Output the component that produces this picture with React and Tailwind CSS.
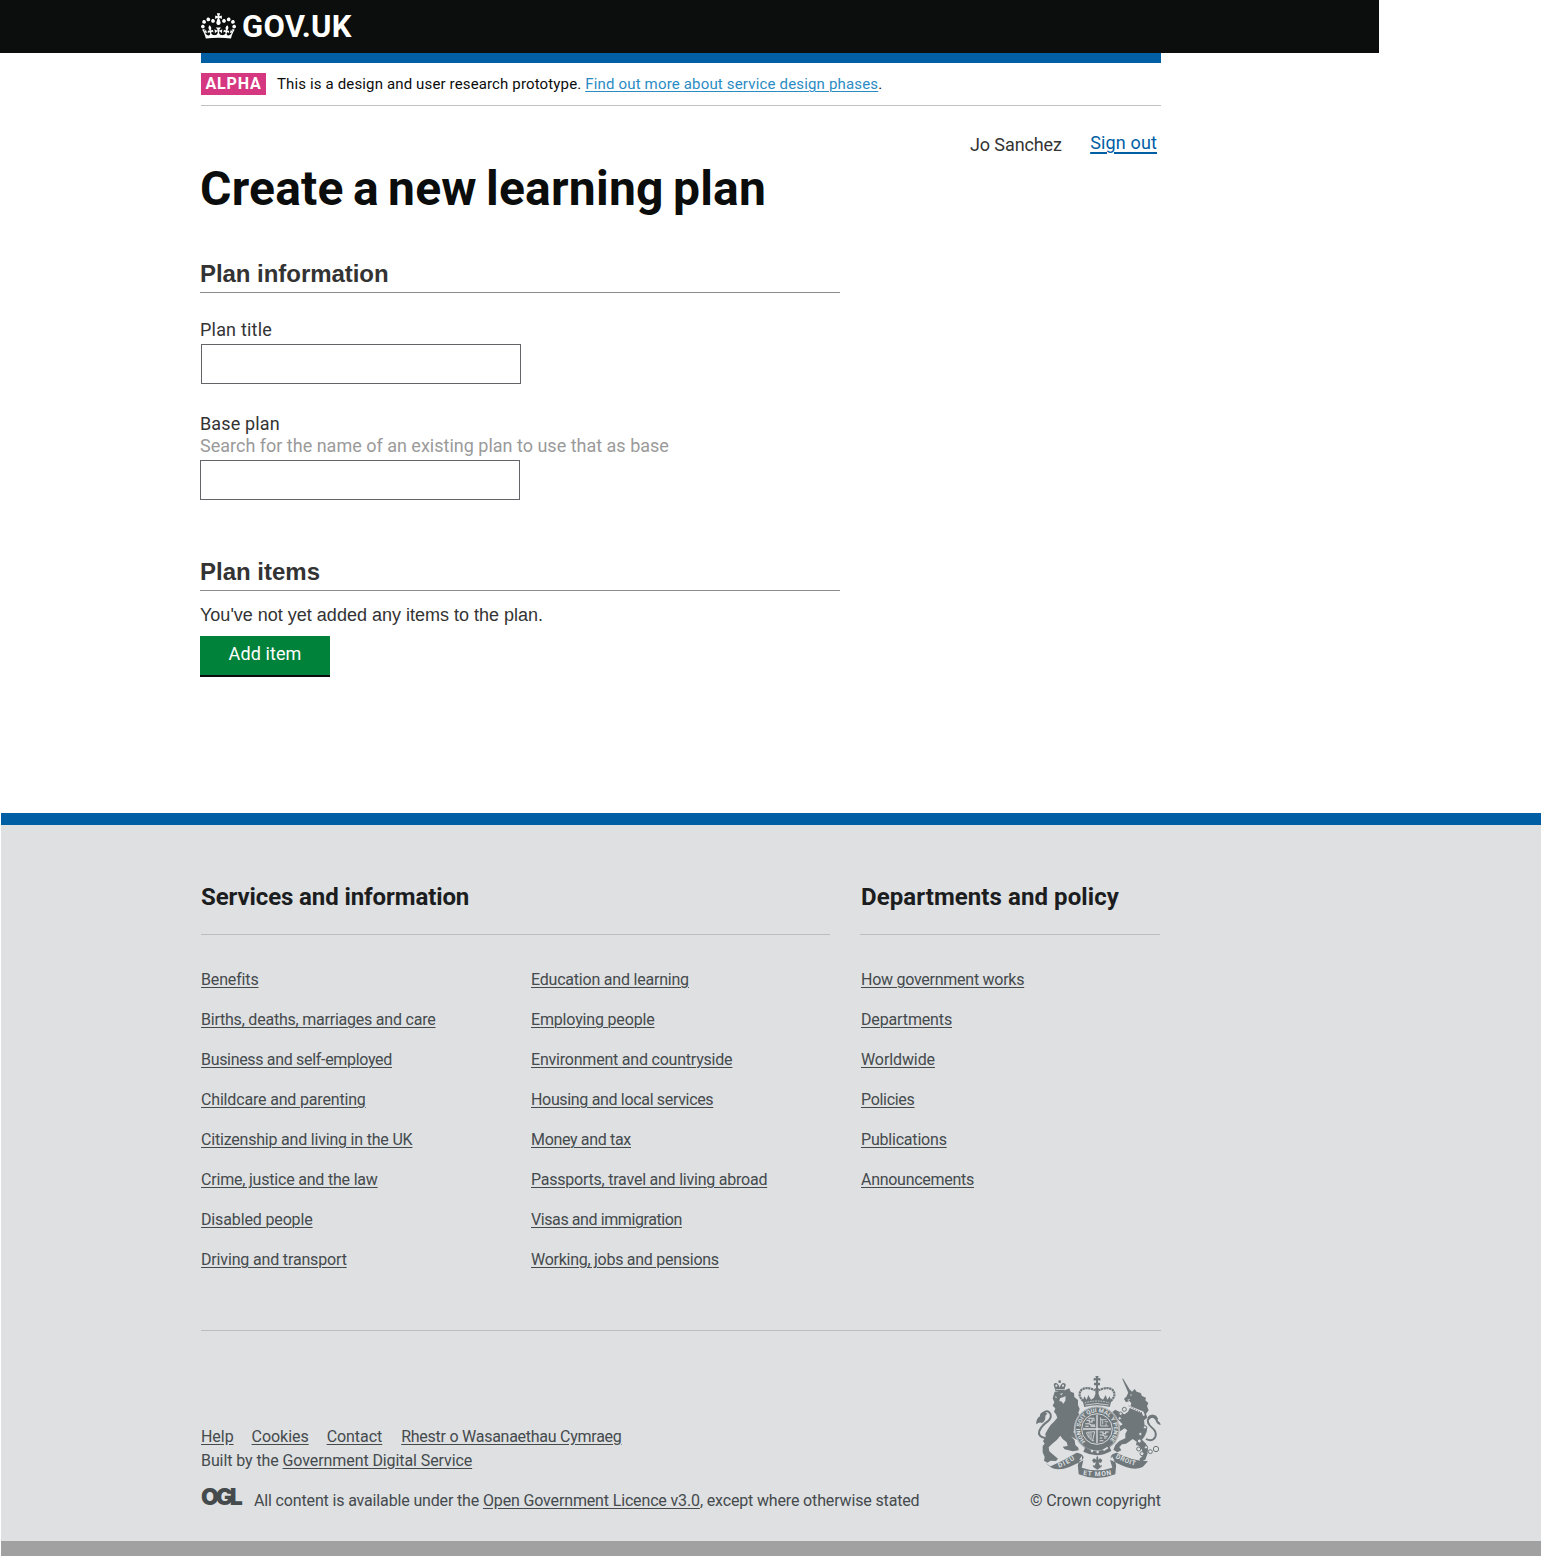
const SERVICES_LEFT = [
  { label: 'Benefits', tracking: 'tracking-[-0.15px]' },
  { label: 'Births, deaths, marriages and care', tracking: 'tracking-[-0.22px]' },
  { label: 'Business and self-employed', tracking: 'tracking-[-0.32px]' },
  { label: 'Childcare and parenting', tracking: 'tracking-[-0.17px]' },
  { label: 'Citizenship and living in the UK', tracking: 'tracking-[-0.2px]' },
  { label: 'Crime, justice and the law', tracking: 'tracking-[-0.2px]' },
  { label: 'Disabled people', tracking: 'tracking-[-0.14px]' },
  { label: 'Driving and transport', tracking: 'tracking-[-0.16px]' },
];

const SERVICES_RIGHT = [
  { label: 'Education and learning', tracking: 'tracking-[-0.21px]' },
  { label: 'Employing people', tracking: 'tracking-[-0.17px]' },
  { label: 'Environment and countryside', tracking: 'tracking-[-0.21px]' },
  { label: 'Housing and local services', tracking: 'tracking-[-0.33px]' },
  { label: 'Money and tax', tracking: 'tracking-[-0.33px]' },
  { label: 'Passports, travel and living abroad', tracking: 'tracking-[-0.23px]' },
  { label: 'Visas and immigration', tracking: 'tracking-[-0.41px]' },
  { label: 'Working, jobs and pensions', tracking: 'tracking-[-0.27px]' },
];

const DEPARTMENTS = [
  { label: 'How government works', tracking: 'tracking-[-0.26px]' },
  { label: 'Departments', tracking: 'tracking-[-0.14px]' },
  { label: 'Worldwide', tracking: 'tracking-[-0.1px]' },
  { label: 'Policies', tracking: 'tracking-[-0.3px]' },
  { label: 'Publications', tracking: 'tracking-[-0.2px]' },
  { label: 'Announcements', tracking: 'tracking-[-0.28px]' },
];

function Crown() {
  return (
    <svg viewBox="0 0 132 97" className="h-[26px] w-[35px]" fill="#fff" aria-hidden="true">
      <path
        fillRule="evenodd"
        d="M25 30.2c3.5 1.5 7.7-.2 9.1-3.7 1.5-3.6-.2-7.8-3.9-9.2-3.6-1.4-7.6.3-9.1 3.9-1.4 3.5.3 7.5 3.9 9zM9 39.5c3.6 1.5 7.8-.2 9.2-3.7 1.5-3.6-.2-7.8-3.9-9.1-3.6-1.5-7.6.2-9.1 3.8-1.4 3.5.3 7.5 3.8 9zM4.4 57.2c3.5 1.5 7.7-.2 9.1-3.8 1.5-3.6-.2-7.7-3.9-9.1-3.5-1.5-7.6.3-9.1 3.8-1.4 3.5.3 7.6 3.9 9.1zm38.3-21.4c3.5 1.5 7.7-.2 9.1-3.8 1.5-3.6-.2-7.7-3.9-9.1-3.6-1.5-7.6.3-9.1 3.8-1.3 3.6.4 7.7 3.9 9.1zm64.4-5.6c-3.6 1.5-7.8-.2-9.1-3.7-1.5-3.6.2-7.8 3.8-9.2 3.6-1.4 7.7.3 9.2 3.9 1.3 3.5-.4 7.5-3.9 9zm15.9 9.3c-3.6 1.5-7.7-.2-9.1-3.7-1.5-3.6.2-7.8 3.7-9.1 3.6-1.5 7.7.2 9.2 3.8 1.5 3.5-.3 7.5-3.8 9zm4.7 17.7c-3.6 1.5-7.8-.2-9.2-3.8-1.5-3.6.2-7.7 3.9-9.1 3.6-1.5 7.7.3 9.2 3.8 1.3 3.5-.4 7.6-3.9 9.1zM89.3 35.8c-3.6 1.5-7.8-.2-9.2-3.8-1.4-3.6.2-7.7 3.9-9.1 3.6-1.5 7.7.3 9.2 3.8 1.4 3.6-.3 7.7-3.9 9.1zM69.7 17.7l8.9 4.7V9.3l-8.9 2.8c-.2-.3-.5-.6-.9-.9L72.4 0H59.6l3.5 11.2c-.3.3-.6.5-.9.9l-8.8-2.8v13.1l8.8-4.7c.3.3.6.7.9.9l-5 15.4v.1c-.2.8-.4 1.6-.4 2.4 0 4.1 3.1 7.5 7 8.1h.2c.3 0 .7.1 1 .1.4 0 .7 0 1-.1h.2c4-.6 7.1-4.1 7.1-8.1 0-.8-.1-1.7-.4-2.4V34l-5.1-15.4c.4-.2.7-.6 1-.9zM66 92.8c16.9 0 32.8 1.1 47.1 3.2 4-16.9 8.9-26.7 14-33.5l-9.6-3.4c1 4.9 1.1 7.2 0 10.2-1.5-1.4-3-4.3-4.2-8.7L108.6 76c2.8-2 5-3.2 7.5-3.3-4.4 9.4-10 11.9-13.6 11.2-4.3-.8-6.3-4.6-5.6-7.9 1-4.7 5.7-5.9 8-.5 4.3-8.7-3-11.4-7.6-8.8 7.1-7.2 7.9-13.5 2.1-21.1-8 6.1-8.1 12.3-4.5 20.8-4.7-5.4-12.1-2.5-9.5 6.2 3.4-5.2 7.9-2 7.2 3.1-.6 4.3-6.4 7.8-13.5 7.2-10.3-.9-10.9-8-11.2-13.8 2.5-.5 7.1 1.8 11 7.3L80.2 60c-4.1 4.4-8 5.3-12.3 5.4 1.4-4.4 8-11.6 8-11.6H55.5s6.4 7.2 7.9 11.6c-4.2-.1-8-1-12.3-5.4l1.4 16.4c3.9-5.5 8.5-7.7 10.9-7.3-.3 5.8-.9 12.8-11.1 13.8-7.2.6-12.9-2.9-13.5-7.2-.7-5 3.8-8.3 7.1-3.1 2.7-8.7-4.6-11.6-9.4-6.2 3.7-8.5 3.6-14.7-4.6-20.8-5.8 7.6-5 13.9 2.2 21.1-4.7-2.6-11.9.1-7.7 8.8 2.3-5.5 7.1-4.2 8.1.5.7 3.3-1.3 7.1-5.7 7.9-3.5.7-9-1.8-13.5-11.2 2.5.1 4.7 1.3 7.5 3.3l-4.7-15.4c-1.2 4.4-2.7 7.2-4.3 8.7-1.1-3-.9-5.3 0-10.2l-9.5 3.4c5 6.9 9.9 16.7 14 33.5 14.8-2.1 30.8-3.2 47.7-3.2z"
      />
    </svg>
  );
}

const INK = '#6f777b';
const PAPER = '#dee0e2';

function RoyalArms() {
  return (
    <svg
      viewBox="45 30 381 312"
      className="-mr-px h-[104px] w-[127px]"
      fill={INK}
      fontFamily="Roboto, sans-serif"
      fontWeight="700"
      aria-hidden="true"
    >
      {/* lion's crown */}
      <circle cx="119" cy="50" r="4" />
      <path d="M103 66 Q98 55 107 54 Q115 54 119 68 Q123 54 131 54 Q141 56 135 67 L132 78 L106 78 Z" />
      <g fill={PAPER}>
        <circle cx="109" cy="62" r="3.2" />
        <circle cx="129" cy="62" r="3.2" />
        <circle cx="119" cy="60" r="2" />
        <path d="M106 73 H132 V75 H106 Z" />
      </g>
      {/* lion */}
      <path d="M104 80 L134 76 L148 70 L152 80 L162 84 L163 96 L174 105 L174 120 L179 132 L175 144 L182 154 L173 160 L184 172 L180 184 L170 182 L164 190 L160 202 L155 216 L164 226 L166 240 L175 248 L176 256 L158 259 L134 253 L128 245 L143 243 L140 232 L128 222 L121 212 L111 224 L96 237 L86 247 L88 259 L98 268 L114 281 L108 288 L92 287 L82 293 L72 287 L74 276 L68 262 L68 243 L74 236 L69 228 L77 216 L76 206 L84 192 L92 180 L102 170 L112 158 L108 148 L102 140 L106 130 L98 122 L103 112 L98 100 L101 90 Z" />
      <g fill={PAPER}>
        <path d="M104 94 L111 96 L108 100 Z" />
        <path d="M120 87 L129 84 L124 91 Z" />
        <path d="M120 100 L137 94 L136 107 L130 116 L124 109 L118 109 Z" />
      </g>
      <path d="M148 156 L172 166 L186 184 L178 196 L162 184 L146 178 Z" />
      <path d="M150 198 L170 206 L180 218 L170 224 L156 216 Z" />
      {/* lion's tail */}
      <path
        d="M77 220 Q52 215 58 198 Q65 182 82 170 Q100 154 88 142 Q78 134 68 146"
        fill="none"
        stroke={INK}
        strokeWidth="6"
      />
      <path d="M72 140 Q58 144 60 154 Q48 160 49 178 Q58 170 66 174 Q78 166 76 152 L82 146 Z" />
      {/* unicorn */}
      <path d="M306 40 L310 42 L333 80 L325 84 Z" />
      <path d="M325 82 L330 74 L336 80 L344 72 L350 80 L362 84 L366 93 L378 98 L376 106 L385 114 L381 124 L386 136 L378 146 L382 158 L372 166 L374 182 L382 186 L380 200 L374 214 L366 224 L378 236 L384 252 L382 268 L376 284 L362 290 L358 282 L368 272 L366 254 L356 242 L348 240 L350 230 L338 222 L330 228 L318 236 L306 238 L298 246 L304 256 L292 262 L280 254 L286 240 L298 228 L316 220 L316 206 L322 196 L314 190 L298 200 L290 190 L282 180 L290 172 L302 182 L308 178 L296 166 L282 154 L276 142 L286 134 L300 142 L314 148 L324 140 L330 128 L334 114 L328 108 L318 112 L312 102 L320 94 Z" />
      <g fill={PAPER}>
        <circle cx="333" cy="90" r="2" />
        <path d="M322 104 L330 102 L326 107 Z" />
      </g>
      <path d="M324 120 L334 128 L368 142 L372 152" fill="none" stroke={PAPER} strokeWidth="6" />
      <path d="M326 122 L336 128 L368 144" fill="none" stroke={INK} strokeWidth="3" strokeDasharray="3 4" />
      {/* unicorn's tail */}
      <path
        d="M378 222 Q396 232 406 216 Q412 202 396 188 Q376 172 388 156 Q402 146 412 162"
        fill="none"
        stroke={INK}
        strokeWidth="5.5"
      />
      <path d="M382 158 Q390 144 408 152 Q414 160 414 168 Q422 172 422 180 Q410 178 406 164 Q396 152 388 164 Z" />
      {/* imperial crown */}
      <path d="M226 33 H236 L234 40 L241 39 V47 L234 46 L234 53 H240 V61 H234 V72 H228 V61 H222 V53 H228 L228 46 L221 47 V39 L228 40 Z" />
      <g fill="none" stroke={INK} strokeWidth="6.5" strokeDasharray="7 1.5">
        <path d="M190 108 Q171 91 184 75 Q200 63 225 76" />
        <path d="M272 108 Q291 91 278 75 Q262 63 237 76" />
      </g>
      <path d="M225 70 H237 L234 104 H228 Z" />
      <path d="M188 108 L193 94 L200 104 L205 90 L213 104 L222 98 L226 88 H236 L240 98 L249 104 L257 90 L262 104 L269 94 L274 108 L269 126 Q231 116 193 126 Z" />
      <g fill="none" stroke={PAPER} strokeWidth="2.4">
        <path d="M194 114 Q231 102 268 114" strokeDasharray="5 3" />
        <path d="M196 120 Q231 111 266 120" />
      </g>
      {/* garter */}
      <circle cx="231" cy="192" r="68" stroke={PAPER} strokeWidth="2" />
      <circle cx="231" cy="192" r="65.5" fill="none" stroke={PAPER} strokeWidth="1.6" />
      <circle cx="231" cy="192" r="46" fill="none" stroke={PAPER} strokeWidth="2.8" />
      <path id="garter" d="M197 229 A50.5 50.5 0 1 1 266 229" fill="none" />
      <g fill={PAPER} fontSize="17">
        <text>
          <textPath href="#garter" textLength="236" lengthAdjust="spacingAndGlyphs">
            HONI SOIT QUI MAL Y PENSE
          </textPath>
        </text>
      </g>
      {/* quartered shield */}
      <g fill="none" stroke={PAPER} strokeWidth="3.2">
        <path d="M231 149 V235 M189 192 H273" strokeWidth="4" />
        <path d="M199 166 h9 v5 h8 v-6 h9 M196 176 h12 l5 4 h12 M205 160 h18 M196 184 h10 m6 0 h14" />
        <path d="M242 157 V183 H265 M242 164 H260 M248 166 V178 M254 170 H264 M258 175 V182" strokeWidth="2.4" />
        <path d="M199 202 Q206 224 222 228 M201 202 L224 200 L218 226 M207 203 V216 M213 203 V222" strokeWidth="2.6" />
        <path d="M239 201 h10 v5 h8 v-5 h9 M239 210 h10 l5 4 h9 M239 219 h8 m5 0 h8 M239 227 h11" />
      </g>
      {/* garter buckle */}
      <path d="M196 246 Q231 272 268 244 L274 258 Q231 282 190 260 Z" />
      <g fill={PAPER}>
        <circle cx="216" cy="258" r="3.6" />
        <circle cx="233" cy="261" r="3.6" />
        <path d="M248 254 L262 245 L265 250 L252 258 Z" />
      </g>
      {/* chain */}
      <g fill={PAPER} stroke={INK} strokeWidth="3">
        <circle cx="313" cy="133" r="6" />
        <circle cx="302" cy="146" r="5" />
        <circle cx="299" cy="160" r="5" />
        <circle cx="375" cy="187" r="5" />
        <circle cx="361" cy="207" r="5" />
        <circle cx="358" cy="228" r="6" />
        <circle cx="356" cy="252" r="6" />
        <circle cx="366" cy="266" r="6" />
        <circle cx="378" cy="247" r="5" />
        <circle cx="391" cy="260" r="6" />
        <circle cx="408" cy="252" r="8" />
      </g>
      {/* fleur-de-lis */}
      <path d="M229 278 L232 272 L235 278 L234 284 L241 280 L247 286 L243 294 L236 292 L240 302 L246 300 L244 306 L232 314 L220 306 L218 300 L224 302 L228 292 L221 294 L216 286 L222 280 L229 284 Z" />
      {/* scroll */}
      <path d="M76 294 L92 304 Q132 286 170 263 Q190 266 191 278 Q190 284 180 288 Q172 294 174 306 L176 328 Q231 350 286 328 L288 306 Q290 294 282 288 Q272 284 272 276 Q274 266 290 263 Q330 286 384 289 L368 306 Q346 316 318 306 Q286 292 270 284 L277 308 Q231 324 185 308 L190 286 Q176 294 148 306 Q118 318 96 309 Z" />
      <path d="M178 284 L186 272 L186 284 Z M276 274 L284 288 L272 284 Z" fill={PAPER} />
      <path id="scroll-left" d="M117 308 Q146 298 172 278" fill="none" />
      <path id="scroll-mid" d="M186 329 Q231 338 277 329" fill="none" />
      <path id="scroll-right" d="M286 278 Q318 296 352 303" fill="none" />
      <g fill={PAPER} fontSize="20">
        <text>
          <textPath href="#scroll-left" textLength="54">DIEU</textPath>
        </text>
        <text>
          <textPath href="#scroll-mid" textLength="86" startOffset="3">ET MON</textPath>
        </text>
        <text>
          <textPath href="#scroll-right" textLength="64">DROIT</textPath>
        </text>
      </g>
    </svg>
  );
}

function FooterList({ items }) {
  return (
    <ul className="flex flex-col gap-5">
      {items.map((item) => (
        <li key={item.label} className="h-5 leading-5">
          <a href="#" className={`underline decoration-1 underline-offset-2 ${item.tracking}`}>
            {item.label}
          </a>
        </li>
      ))}
    </ul>
  );
}

function Header() {
  return (
    <header className="flex h-[53px] w-[1379px] items-start bg-[#0b0e0c] pl-[201px]">
      <a href="#" className="flex text-white">
        <span className="mt-[13px]">
          <Crown />
        </span>
        <span className="mt-[9px] ml-[6px] text-[31px] leading-9 font-bold tracking-[0.25px]">GOV.UK</span>
      </a>
    </header>
  );
}

function PhaseBanner() {
  return (
    <div className="ml-[201px] w-[960px] border-t-10 border-b border-t-[#005ea5] border-b-[#bfc1c3]">
      <div className="flex h-[42px] items-center text-[15px] leading-[22px] text-[#0b0c0c]">
        <strong className="h-[22px] w-[65px] bg-[#d53880] text-center text-base leading-[22px] font-bold tracking-[0.8px] text-white">
          ALPHA
        </strong>
        <p className="ml-[11px] tracking-[0.14px]">
          This is a design and user research prototype.{' '}
          <a href="#" className="tracking-[0.17px] text-[#2b8cc4] underline decoration-1 underline-offset-2">
            Find out more about service design phases
          </a>
          .
        </p>
      </div>
    </div>
  );
}

function SectionHeading({ children, className }) {
  return (
    <h2
      className={`h-[35px] w-[640px] border-b border-[#8c8c8c] font-['Liberation_Sans',Arial,sans-serif] text-2xl leading-[31px] font-bold text-[#333333] ${className}`}
    >
      {children}
    </h2>
  );
}

function PlanForm() {
  return (
    <main className="pl-[200px]">
      <div className="flex w-[961px] pt-6 pl-[770px] text-lg leading-6 text-[#333]">
        <span className="pt-[3px] tracking-[-0.1px]">Jo Sanchez</span>
        <a
          href="#"
          className="ml-auto pt-px pr-[4px] tracking-[0.15px] text-[#005ea5] underline decoration-2 underline-offset-[3px]"
        >
          Sign out
        </a>
      </div>
      <h1 className="mt-[2px] text-5xl leading-[60px] font-bold tracking-[0.24px] text-[#0b0c0c] [word-spacing:-3px]">
        Create a new learning plan
      </h1>
      <SectionHeading className="mt-[39px] tracking-[-0.05px]">Plan information</SectionHeading>
      <div className="mt-[26px] text-lg leading-[22px] text-[#333]">
        <label htmlFor="plan-title" className="block tracking-[0.2px]">
          Plan title
        </label>
        <input id="plan-title" className="mt-[3px] ml-px block h-10 w-80 border border-[#636467] bg-white px-2" />
      </div>
      <div className="mt-[29px] text-lg leading-[22px] text-[#333]">
        <label htmlFor="base-plan" className="block">
          <span className="block tracking-[0.15px]">Base plan</span>
          <span className="block text-[#9a9a9a]">Search for the name of an existing plan to use that as base</span>
        </label>
        <input id="base-plan" className="mt-[3px] block h-10 w-80 border border-[#636467] bg-white px-2" />
      </div>
      <SectionHeading className="mt-[56px]">Plan items</SectionHeading>
      <p className="mt-[13px] font-['Liberation_Sans',Arial,sans-serif] text-lg leading-[22px] text-[#333]">
        You&#39;ve not yet added any items to the plan.
      </p>
      <button
        type="button"
        className="mt-[10px] block h-[41px] w-[130px] border-b-2 border-[#0b0c0c] bg-[#00823b] pb-[3px] text-lg leading-6 tracking-[0.1px] text-white"
      >
        Add item
      </button>
    </main>
  );
}

function Footer() {
  return (
    <footer className="mt-[136px] ml-px h-[743px] border-t-12 border-b-15 border-t-[#005ea5] border-b-[#a1a1a1] bg-[#dee0e2] pl-[200px] text-base text-[#454a4d]">
      <div className="flex w-[959px] gap-[30px] pt-[56px]">
        <section className="w-[629px]">
          <h2 className="h-[54px] border-b border-[#bbbdbf] text-2xl leading-8 font-bold tracking-[-0.1px] text-[#1c1d1e]">
            Services and information
          </h2>
          <div className="grid grid-cols-[330px_1fr] pt-[35px]">
            <FooterList items={SERVICES_LEFT} />
            <FooterList items={SERVICES_RIGHT} />
          </div>
        </section>
        <section className="w-[300px]">
          <h2 className="h-[54px] border-b border-[#bbbdbf] pl-px text-2xl leading-8 font-bold tracking-[0.08px] text-[#1c1d1e]">
            Departments and policy
          </h2>
          <div className="pt-[35px] pl-px">
            <FooterList items={DEPARTMENTS} />
          </div>
        </section>
      </div>
      <div className="mt-[60px] flex w-[960px] justify-between border-t border-[#bbbdbf]">
        <div className="pt-[94px] leading-6">
          <ul className="flex gap-[18px] tracking-[-0.05px]">
            <li><a href="#" className="underline underline-offset-2">Help</a></li>
            <li><a href="#" className="underline underline-offset-2">Cookies</a></li>
            <li><a href="#" className="underline underline-offset-2">Contact</a></li>
            <li className="ml-px tracking-[-0.26px]">
              <a href="#" className="underline underline-offset-2">Rhestr o Wasanaethau Cymraeg</a>
            </li>
          </ul>
          <p className="tracking-[-0.09px]">
            Built by the <a href="#" className="underline underline-offset-2">Government Digital Service</a>
          </p>
          <div className="mt-4 flex">
            <span className="-mt-[4px] w-[53px] font-['Inter',sans-serif] text-[23px] leading-6 font-black tracking-[-3.2px]">
              OGL
            </span>
            <p className="tracking-[-0.15px]">
              All content is available under the{' '}
              <a href="#" className="underline underline-offset-2">Open Government Licence v3.0</a>, except where
              otherwise stated
            </p>
          </div>
        </div>
        <div className="flex flex-col items-end pt-[44px]">
          <RoyalArms />
          <p className="mt-[10px] leading-6 tracking-[-0.08px]">© Crown copyright</p>
        </div>
      </div>
    </footer>
  );
}

export default function App() {
  return (
    <div className="h-[1557px] w-[1541px] overflow-hidden bg-white font-['Roboto',sans-serif]">
      <Header />
      <PhaseBanner />
      <PlanForm />
      <Footer />
    </div>
  );
}
